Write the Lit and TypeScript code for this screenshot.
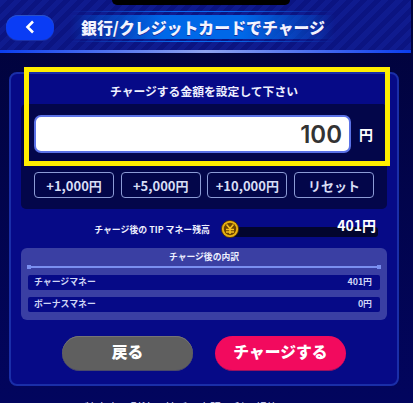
import { LitElement, html, css } from "lit";
import { customElement } from "lit/decorators.js";

@customElement("app-root")
export class AppRoot extends LitElement {
  static styles = css`
    :host { display: block; width: 413px; height: 403px; overflow: hidden; position: relative;
      background: linear-gradient(180deg, #01033a 0%, #02055e 100%); color: #fff;
      font-family: "Noto Sans CJK JP", "Noto Sans", sans-serif; }
    * { box-sizing: border-box; }
    .notch { position: absolute; left: 112px; top: 0; width: 178px; height: 5px; background: #000; border-radius: 0 0 10px 10px; }
    .header { height: 53px; width: 411px; border-bottom: 3px solid; border-image: linear-gradient(90deg, #0a3df0 0%, #8fa3f0 50%, #0a3df0 100%) 1;
      background: repeating-linear-gradient(135deg, #0f1b8f 0 5px, #0b1482 5px 10px);
      display: flex; align-items: center; padding: 0 0 0 6px; }
    .back { width: 48px; height: 25px; margin-top: 4px; border-radius: 12px; background: #0a3cf5; display: flex; align-items: center; justify-content: center; flex: none; box-shadow: 0 1px 0 #1a30a8, inset 0 1px 0 #2a50c8; }
    .title-band { margin-left: 16px; width: 265px; height: 24px; margin-top: 4px; padding-left: 1px; display: flex; align-items: center; justify-content: center; position: relative;
      background: linear-gradient(90deg, rgba(0,104,232,0) 0%, rgba(0,104,232,.3) 8%, #0068e8 35%, #0068e8 65%, rgba(0,104,232,.3) 92%, rgba(0,104,232,0) 100%); }
    .title-band::before, .title-band::after { content: ""; position: absolute; left: 0; right: 0; height: 1px;
      background: linear-gradient(90deg, rgba(10,108,240,0), #0a6cf0 40%, #0a6cf0 60%, rgba(10,108,240,0)); }
    .title-band::before { top: -4px; }
    .title-band::after { bottom: -3px; }
    .title { font-size: 15.9px; font-weight: 900; white-space: nowrap; color: #f2f4ff; text-shadow: 0 1px 0 #1a2a9a; }
    .main { padding: 19px 14px 0 9px; }
    .card { width: 390px; height: 314px; border: 2px solid #1a2ea8; border-radius: 8px; background: #060a87;
      padding: 0 10px; display: flex; flex-direction: column; }
    .lead { height: 30px; display: flex; align-items: center; justify-content: center; font-size: 11.8px; font-weight: 700; color: #eef0ff; padding-top: 3px; }
    .panel { height: 105px; background: #03064a; border-radius: 5px; padding: 11px 13px 0; }
    .input-row { display: flex; align-items: center; height: 38px; }
    .input { width: 317px; height: 38px; background: #fff; border: 2px solid #5b72e6; border-radius: 7px; display: flex; align-items: center; justify-content: flex-end; padding-right: 7px;
      font: 600 24px "Inter", "Noto Sans", sans-serif; color: #333; flex: none; }
    .yen { margin-left: 8px; font-size: 14px; font-weight: 700; }
    .quick { display: flex; gap: 6.5px; margin-top: 19px; }
    .qbtn { width: 80.5px; height: 26px; border: 1px solid #8c9bd6; border-radius: 4px; display: flex; align-items: center; justify-content: center; font-size: 13px; font-weight: 700; color: #d8def5; white-space: nowrap; background: #03064a; }
    .balance { display: flex; align-items: center; height: 26px; margin-top: 7px; }
    .bal-label { width: 189px; text-align: right; font-size: 8.9px; font-weight: 700; color: #eef0ff; white-space: nowrap; }
    .meter { margin-left: 11px; width: 157px; height: 18px; position: relative; display: flex; align-items: center; }
    .bar { position: absolute; left: 9px; right: 0; top: 7px; height: 10px; background: #02052e; border-radius: 0 3px 3px 0; }
    .coin { width: 18px; height: 18px; position: relative; flex: none; }
    .bal-val { position: absolute; right: 2px; top: -4px; font-size: 14px; font-weight: 700; color: #fff; line-height: 18px; }
    .break { margin-top: 6px; height: 72px; background: #3a3fa3; border-radius: 6px; padding: 2px 7px 0; }
    .break h3 { margin: 0; height: 14px; line-height: 14px; font-size: 8.8px; font-weight: 700; text-align: center; color: #eef0ff; }
    .rule { height: 2px; margin: 2px -1px 0; background: #7a8ff0; position: relative; }
    .rule::before, .rule::after { content: ""; position: absolute; top: -1px; width: 4px; height: 4px; background: #7a8ff0; }
    .rule::before { left: 0; } .rule::after { right: 0; }
    .row { height: 15px; margin-top: 7px; background: #060a87; border-radius: 2px; padding: 0 8px 2px 6px; display: flex; justify-content: space-between; align-items: center; font-size: 8.9px; font-weight: 700; color: #cfd6f5; }
    .actions { display: flex; gap: 22px; margin-top: 16px; padding-left: 41px; }
    .act { width: 131px; height: 35px; padding-bottom: 3px; border-radius: 18px; display: flex; align-items: center; justify-content: center; font-size: 15.8px; font-weight: 900; color: #fff; }
    .gray { background: #5f5f5f; box-shadow: inset 0 1px 0 #757575; border-bottom: 1px solid #4a4a6a; }
    .pink { background: #f20a5e; border-bottom: 1px solid #9a1060; }
    .foot { margin-top: 14px; text-align: center; font-size: 11.4px; line-height: 14px; color: #e0e4ff; white-space: nowrap; }
    .highlight { position: absolute; left: 24px; top: 67px; width: 366px; height: 99px; border: 5px solid #ffee00; pointer-events: none; }
  `;

  render() {
    return html`
      <div class="notch"></div>
      <div class="header">
        <div class="back">
          <svg width="10" height="14" viewBox="0 0 10 14"><path d="M8 1.5 2.5 7 8 12.5" fill="none" stroke="#fff" stroke-width="2.6"/></svg>
        </div>
        <div class="title-band"><span class="title">銀行/クレジットカードでチャージ</span></div>
      </div>
      <div class="main">
        <div class="card">
          <div class="lead">チャージする金額を設定して下さい</div>
          <div class="panel">
            <div class="input-row"><div class="input">100</div><span class="yen">円</span></div>
            <div class="quick">
              <div class="qbtn">+1,000円</div><div class="qbtn">+5,000円</div><div class="qbtn">+10,000円</div><div class="qbtn">リセット</div>
            </div>
          </div>
          <div class="balance">
            <div class="bal-label">チャージ後の TIP マネー残高</div>
            <div class="meter">
              <div class="bar"></div>
              <svg class="coin" viewBox="0 0 18 18">
                <circle cx="9" cy="9" r="8.6" fill="#e8b010" stroke="#4a2c00" stroke-width=".8"/>
                <circle cx="9" cy="9" r="6.2" fill="#6a4200"/>
                <path d="M5.5 4.5 9 8.5 12.5 4.5M9 8.5V14M5 9.5h8M5 12h8" fill="none" stroke="#f5c020" stroke-width="1.5"/>
              </svg>
              <div class="bal-val">401円</div>
            </div>
          </div>
          <div class="break">
            <h3>チャージ後の内訳</h3>
            <div class="rule"></div>
            <div class="row"><span>チャージマネー</span><span>401円</span></div>
            <div class="row"><span>ボーナスマネー</span><span>0円</span></div>
          </div>
          <div class="actions">
            <div class="act gray">戻る</div>
            <div class="act pink">チャージする</div>
          </div>
        </div>
        <div class="foot">特定商取引法に基づく表記・利用規約について</div>
      </div>
      <div class="highlight"></div>
    `;
  }
}
